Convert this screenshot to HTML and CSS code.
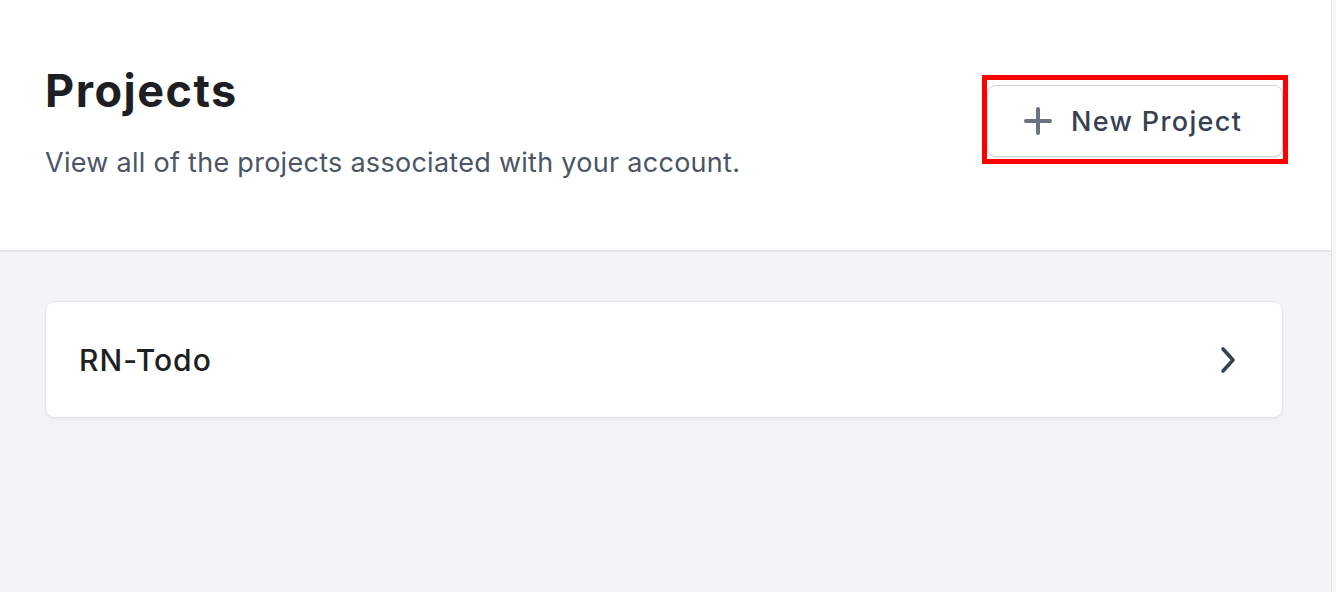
FILE: index.html
```html
<!DOCTYPE html>
<html lang="en">
<head>
    <meta charset="UTF-8">
    <meta name="viewport" content="width=device-width, initial-scale=1.0">
    <title>Projects</title>
    <link rel="stylesheet" href="styles.css">
</head>
<body>
    <div class="main">
        <!-- Page header -->
        <header class="page-header">
            <div class="heading">
                <h1>Projects</h1>
                <p>View all of the projects associated with your account.</p>
            </div>
            <div class="highlight">
                <button class="btn-new">
                    <svg class="plus" width="28" height="28" viewBox="0 0 28 28">
                        <path d="M14 2v24M2 14h24" stroke="#6b7280" stroke-width="4" stroke-linecap="round" fill="none"/>
                    </svg>
                    <span>New Project</span>
                </button>
            </div>
        </header>

        <!-- Project list -->
        <section class="project-list">
            <a href="#" class="project-card">
                <span class="project-name">RN-Todo</span>
                <svg class="chevron" width="16" height="28" viewBox="0 0 16 28">
                    <polyline points="3,3 13,14 3,25" stroke="#374151" stroke-width="3.6" stroke-linecap="round" stroke-linejoin="round" fill="none"/>
                </svg>
            </a>
        </section>
    </div>
</body>
</html>
```

FILE: styles.css
```css
body {
    margin: 0;
    font-family: 'Inter', 'Noto Sans', sans-serif;
    background: #f7f7f7;
    height: 100vh;
    overflow: hidden;
}

.main {
    width: 1331px;
    height: 100vh;
    border-right: 1px solid #e2e2e4;
    background: #f3f4f6;
}

.page-header {
    background: #fff;
    height: 252px;
    box-sizing: border-box;
    padding: 64px 48px 0 45px;
    border-bottom: 2px solid #e2e4e9;
    display: flex;
    justify-content: space-between;
    align-items: flex-start;
}

.heading h1 {
    margin: 0;
    font-size: 45px;
    line-height: 54px;
    font-weight: 700;
    letter-spacing: 1.5px;
    color: #1d1f23;
}

.heading p {
    margin: 24px 0 0;
    font-size: 27px;
    line-height: 42px;
    letter-spacing: 0.28px;
    color: #4b5563;
}

.highlight {
    margin-top: 11px;
    margin-right: -5px;
    border: 5px solid #f00;
    padding: 5px 0 2px 0;
}

.btn-new {
    display: flex;
    align-items: center;
    width: 296px;
    height: 72px;
    box-sizing: border-box;
    padding: 0 0 0 36px;
    background: #fff;
    border: 1px solid #d1d5db;
    border-radius: 9px;
    box-shadow: 0 1px 2px rgba(0, 0, 0, 0.08);
    font-family: inherit;
    font-size: 27px;
    font-weight: 500;
    letter-spacing: 1.35px;
    color: #374151;
    cursor: pointer;
}

.btn-new .plus {
    margin-right: 19px;
    flex-shrink: 0;
}

.project-list {
    padding: 49px 48px 0 45px;
}

.project-card {
    display: flex;
    align-items: center;
    justify-content: space-between;
    height: 117px;
    box-sizing: border-box;
    padding: 0 46px 0 33px;
    background: #fff;
    border: 1px solid #e2e4e9;
    border-radius: 10px;
    box-shadow: 0 1px 3px rgba(0, 0, 0, 0.06);
    text-decoration: none;
}

.project-name {
    font-size: 30px;
    font-weight: 500;
    letter-spacing: 1px;
    color: #1d1f23;
}
```
